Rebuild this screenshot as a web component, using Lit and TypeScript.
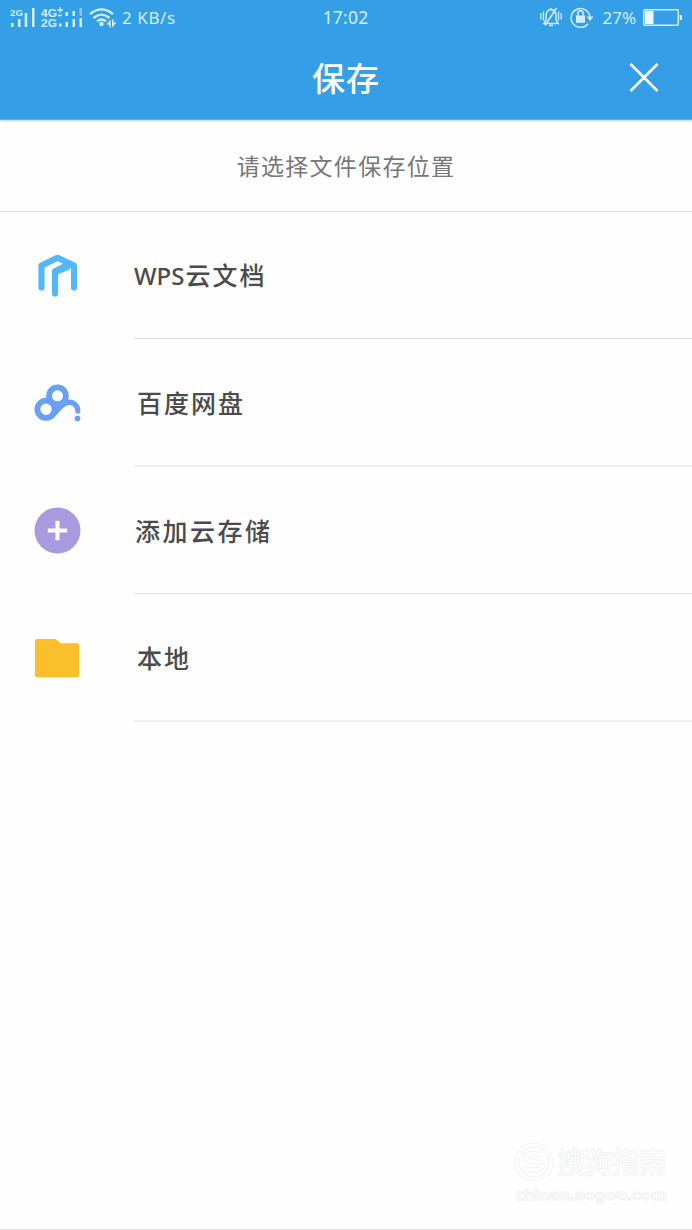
import { LitElement, html, svg, css } from "lit";
import { customElement, property } from "lit/decorators.js";

const cloudDocs = svg`
  <g fill="none" stroke="#53b8f8" stroke-width="6.2" stroke-linecap="round" stroke-linejoin="round">
    <path d="M7.500 35.500V13.600L23.500 5.800L40 13.600V35.500"/>
    <path d="M21 41.500V19.200L33 13.200"/>
  </g>
  <path d="M21.500 18L33 10.800L40 13.800L34.500 18L24 22.300Z" fill="#53b8f8"/>`;

const baidu = svg`
  <g fill="none" stroke="#68a1f4">
    <circle cx="12" cy="29.3" r="8.6" stroke-width="5.8"/>
    <circle cx="23.5" cy="15.8" r="8.4" stroke-width="5.8"/>
    <path d="M18 36L27 26.3C31 22.4 35 21.3 39 23.1C42.4 24.7 43.8 27.4 43.8 30.9" stroke-width="5.2" stroke-linecap="round"/>
  </g>
  <circle cx="43.5" cy="38.6" r="2.9" fill="#68a1f4"/>`;

const addCloud = svg`
  <circle cx="23.5" cy="23.5" r="23" fill="#a79adf"/>
  <path d="M23.5 13.8V33.2M13.8 23.5H33.2" stroke="#fff" stroke-width="4"/>`;

const folder = svg`
  <path d="M3 4H20.500Q22 4 23 5L26.800 8.300H43Q45 8.300 45 10.300V40.200Q45 42.200 43 42.200H3Q1 42.200 1 40.200V6Q1 4 3 4Z" fill="#fcbf2c"/>`;

const items = [
  { latin: "WPS", label: "云文档", icon: cloudDocs, shift: "", line: "" },
  { latin: "", label: "百度网盘", icon: baidu, shift: "inset", line: "soft" },
  { latin: "", label: "添加云存储", icon: addCloud, shift: "wide", line: "" },
  { latin: "", label: "本地", icon: folder, shift: "inset", line: "soft" },
];

@customElement("status-bar")
export class StatusBar extends LitElement {
  static styles = css`
    :host {
      display: flex;
      align-items: center;
      justify-content: space-between;
      height: 35px;
      padding: 0 10px;
      color: #d2efff;
      font: 400 17px/35px "Noto Sans", "Noto Sans CJK SC", sans-serif;
    }
    svg { display: block; flex: none; }
    .side { display: flex; align-items: center; flex: 1; }
    .right { justify-content: flex-end; }
    .speed { margin-left: 5px; font-size: 17px; letter-spacing: 0.600px; }
    .time { letter-spacing: 0.2px; margin-right: 1px; font-size: 17.5px; }
    .charge { margin: 0 7px 0 8px; font-size: 17px; }
    .tiny { font: 700 9px "Liberation Sans", sans-serif; fill: #d2efff; }
    .small { font: 700 11px "Liberation Sans", sans-serif; fill: #d2efff; }
  `;

  render() {
    return html`
      <div class="side">
        <svg width="107" height="35" viewBox="10 0 107 35">
          <text class="tiny" x="10" y="15.5" textLength="13" lengthAdjust="spacingAndGlyphs">2G</text>
          <g fill="#d2efff">
            <path d="M11 23h2.5v4h-2.5zM18 19h2.5v8h-2.5zM24.700 13h2.500v14h-2.500zM32 8h2.500v19h-2.500z"/>
            <path d="M59 23.500h2.500v3h-2.500zM65.500 22h2.500v5h-2.500zM72.500 19h2.500v8h-2.500zM79.500 18h2.500v9h-2.500zM65.500 12h2.500v4h-2.500zM72.500 11h2.500v5h-2.500z"/>
            <path d="M79.500 8h2.500v8h-2.500z" opacity=".5"/>
          </g>
          <text class="small" x="41" y="16.500" textLength="16" lengthAdjust="spacingAndGlyphs">4G</text>
          <text class="small" x="41" y="27" textLength="16" lengthAdjust="spacingAndGlyphs">2G</text>
          <path d="M57.500 10h5.500M60.200 7.300v5.400M58 15.500h4" stroke="#d2efff" stroke-width="1.300"/>
          <g fill="none" stroke="#d2efff" stroke-width="2.300">
            <path d="M90 14.200Q101.500 4.600 113 14.200"/>
            <path d="M93.500 18Q101.500 11.300 109.500 18"/>
            <path d="M97 21.500Q101.500 17.500 106 21.500"/>
          </g>
          <circle cx="101.500" cy="24" r="2.200" fill="#d2efff"/>
          <path d="M106.300 24.500L110.700 19.500v8h-1.500v-3zM112 19.500h1.500v3h3L112 27.500z" fill="#d2efff"/>
        </svg>
        <span class="speed">2 KB/s</span>
      </div>
      <span class="time">17:02</span>
      <div class="side right">
        <svg width="54" height="35" viewBox="540 0 54 35" fill="none" stroke="#d2efff" stroke-width="1.500">
          <path d="M544 23.500Q546.200 21 546.200 17V14.500Q546.500 10 551 9.500Q555.500 10 555.800 14.500V17Q555.800 21 558 23.500ZM549 25.500h4M545 25.500L556.500 8M551 9.500V8"/>
          <path d="M540.800 13v6.500M543.500 11.500v9M558.500 11.500v9M561.200 13v6.500" stroke-width="1.300"/>
          <path d="M588 23.700A9.400 9.400 0 1 1 589.900 17"/>
          <path d="M586.500 16.500h7L590 21Z" fill="#d2efff" stroke="none"/>
          <rect x="576" y="15.500" width="9" height="7.300" fill="#d2efff" stroke="none"/>
          <path d="M577.900 16v-2.600a2.600 2.600 0 0 1 5.200 0V16"/>
        </svg>
        <span class="charge">27%</span>
        <svg width="39" height="35" viewBox="643 0 39 35">
          <rect x="643.800" y="9.800" width="34.500" height="15.400" rx="1" fill="none" stroke="#d2efff" stroke-width="1.500"/>
          <path d="M645 11h8.500v13h-8.500zM679.800 15h2v5h-2z" fill="#e8f8ff"/>
        </svg>
      </div>
    `;
  }
}

@customElement("location-row")
export class LocationRow extends LitElement {
  @property({ attribute: false }) item = items[0];

  static styles = css`
    :host { display: flex; padding-left: 34px; }
    .icon { width: 47px; margin-right: 53px; display: flex; align-items: center; flex: none; }
    svg { display: block; }
    .body {
      flex: 1;
      display: flex;
      align-items: center;
      border-bottom: 1px solid #e1e1e1;
      color: #4b4b4b;
      font: 500 25px/36px "Noto Sans CJK SC", sans-serif;
      letter-spacing: 2px;
    }
    .soft { border-bottom: 2px solid #f0f0f0; }
    .label { padding-bottom: 1px; }
    .soft .label { padding-bottom: 0; }
    .inset { padding-left: 3px; }
    .wide { padding-left: 1px; padding-bottom: 0; letter-spacing: 2.500px; }
    .latin { font-family: "Noto Sans", sans-serif; font-size: 24px; letter-spacing: 0; margin-right: 1px; }
  `;

  render() {
    const { latin, label, icon, shift, line } = this.item;
    return html`
      <div class="icon"><svg width="47" height="47" viewBox="0 0 47 47">${icon}</svg></div>
      <div class="body ${line}">
        <div class="label ${shift}">${latin ? html`<span class="latin">${latin}</span>` : ""}${label}</div>
      </div>
    `;
  }
}

@customElement("app-root")
export class AppRoot extends LitElement {
  static styles = css`
    :host {
      display: flex;
      flex-direction: column;
      position: relative;
      box-sizing: border-box;
      height: 1230px;
      overflow: hidden;
      background: #fefefe;
      border-bottom: 1px solid #e2e2e2;
      font-family: "Noto Sans CJK SC", sans-serif;
    }
    header {
      height: 119px;
      flex: none;
      background: #349fe6;
      border-bottom: 1px solid #73a9d9;
      box-shadow: 0 1px 2px #b9cde4;
    }
    .bar {
      display: grid;
      grid-template-columns: 1fr auto 1fr;
      align-items: center;
      height: 84px;
      padding: 0 33px;
    }
    h1 {
      grid-column: 2;
      margin: 0;
      color: #fff;
      font-size: 33px;
      line-height: 48px;
      font-weight: 500;
      letter-spacing: 1px;
    }
    .close { justify-self: end; display: block; }
    .prompt {
      height: 92px;
      flex: none;
      box-sizing: border-box;
      border-bottom: 1px solid #dedede;
      text-align: center;
      color: #777;
      font-size: 23px;
      line-height: 90px;
      letter-spacing: 1.300px;
    }
    main { display: grid; grid-template-rows: 127px 128px 127px 128px; }
    .mark { position: absolute; right: 23px; bottom: 20px; width: 156px; height: 70px; }
    .brand { font: 500 28px "Noto Sans CJK SC", sans-serif; }
    .site { font: 700 14px "Liberation Sans", sans-serif; }
  `;

  render() {
    return html`
      <header>
        <status-bar></status-bar>
        <div class="bar">
          <h1>保存</h1>
          <svg class="close" width="30" height="30" viewBox="0 0 30 30">
            <path d="M1.500 2L28.500 29M28.500 2L1.500 29" stroke="#fff" stroke-width="2.500"/>
          </svg>
        </div>
      </header>
      <div class="prompt">请选择文件保存位置</div>
      <main>${items.map((item) => html`<location-row .item=${item}></location-row>`)}</main>
      <svg class="mark" viewBox="0 0 156 70" fill="#fff" stroke="#f2f2f2">
        <circle cx="21" cy="23" r="17" fill="none" stroke-width="5"/>
        <circle cx="21" cy="23" r="17" fill="none" stroke="#fff" stroke-width="3"/>
        <path d="M29 16Q13 12 13 18.500C13 24 29 21 29 27Q28 33 12 29.500" fill="none" stroke-width="5.500"/>
        <path d="M29 16Q13 12 13 18.500C13 24 29 21 29 27Q28 33 12 29.500" fill="none" stroke="#fff" stroke-width="3.500"/>
        <text class="brand" x="44" y="34" textLength="110">搜狗指南</text>
        <text class="site" x="2" y="61" textLength="152" lengthAdjust="spacingAndGlyphs">zhinan.sogou.com</text>
      </svg>
    `;
  }
}
